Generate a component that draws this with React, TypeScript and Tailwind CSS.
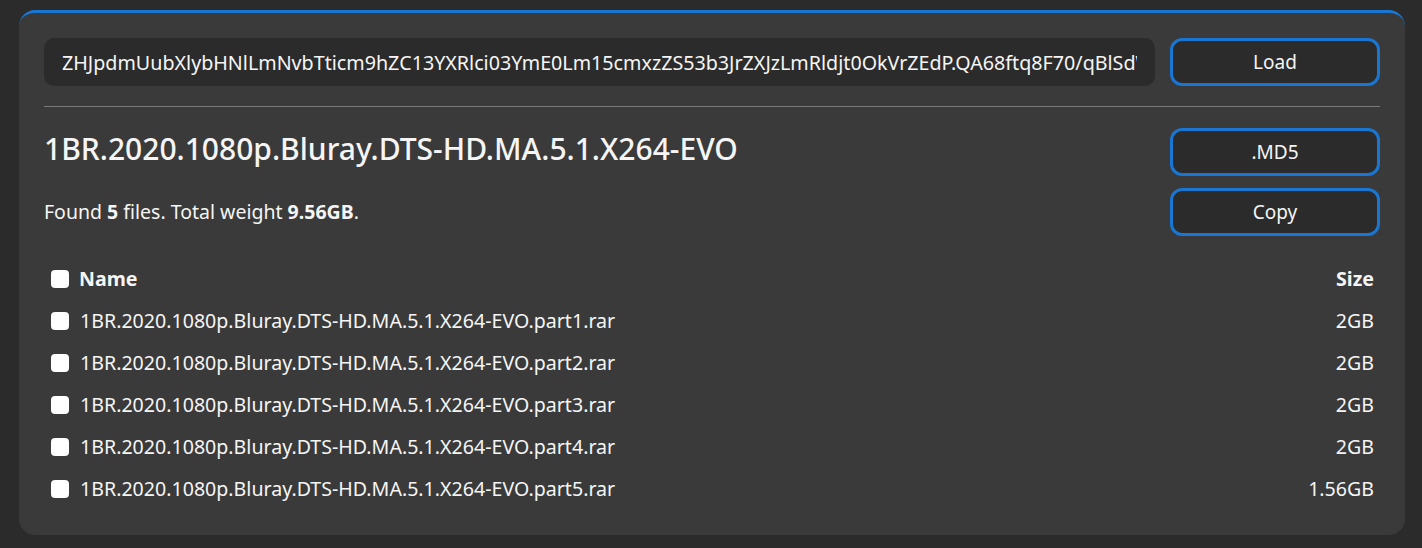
import React, { useState } from 'react';

const TOKEN =
  'ZHJpdmUubXlybHNlLmNvbTticm9hZC13YXRlci03YmE0Lm15cmxzZS53b3JrZXJzLmRldjt0OkVrZEdP.QA68ftq8F70/qBlSdWx0c3RvcmFnZQ';

const BASE = '1BR.2020.1080p.Bluray.DTS-HD.MA.5.1.X264-EVO';

const files = [
  { name: `${BASE}.part1.rar`, size: '2GB' },
  { name: `${BASE}.part2.rar`, size: '2GB' },
  { name: `${BASE}.part3.rar`, size: '2GB' },
  { name: `${BASE}.part4.rar`, size: '2GB' },
  { name: `${BASE}.part5.rar`, size: '1.56GB' },
];

const Box: React.FC<{ checked: boolean; onChange: () => void }> = ({ checked, onChange }) => (
  <button
    type="button"
    onClick={onChange}
    className="w-[18px] h-[18px] rounded-[4px] bg-white flex items-center justify-center shrink-0"
  >
    {checked && (
      <svg viewBox="0 0 16 16" className="w-3 h-3 text-[#1976d2]">
        <path d="M3 8.5l3 3 7-7" fill="none" stroke="currentColor" strokeWidth="2.5" />
      </svg>
    )}
  </button>
);

const OutlineButton: React.FC<{ children: React.ReactNode }> = ({ children }) => (
  <button
    type="button"
    className="w-[210px] h-12 rounded-xl border-[3px] border-[#1976d2] bg-[#2b2b2b] text-[19px] text-[#f5f5f5] hover:bg-[#333]"
  >
    {children}
  </button>
);

export default function App() {
  const [selected, setSelected] = useState<boolean[]>(files.map(() => false));
  const all = selected.every(Boolean);

  const toggle = (i: number) => setSelected((s) => s.map((v, j) => (j === i ? !v : v)));

  return (
    <div
      className="min-h-screen bg-[#2b2b2b] pl-[19px] pr-[17px] pt-[10px] pb-4 text-[#f5f5f5]"
      style={{ fontFamily: '"Noto Sans", "Open Sans", sans-serif' }}
    >
      <div className="rounded-2xl bg-[#3a3a3a] border-t-[3px] border-[#1976d2] px-[25px] pt-[25px] pb-[25px]">
        {/* Token input */}
        <div className="flex gap-[15px]">
          <input
            type="text"
            defaultValue={TOKEN}
            className="flex-1 min-w-0 h-12 rounded-[10px] bg-[#2b2b2b] px-[18px] text-[19.7px] text-[#f5f5f5] focus:outline-none"
          />
          <OutlineButton>Load</OutlineButton>
        </div>

        <div className="mt-[20px] h-px bg-[#7a7a7a]" />

        {/* Summary */}
        <div className="mt-[21px] flex justify-between">
          <div>
            <h1 className="text-[30px] leading-[42px] font-medium">{BASE}</h1>
            <p className="mt-[28px] text-[19.5px] leading-[28px]">
              Found <b>5</b> files. Total weight <b>9.56GB</b>.
            </p>
          </div>
          <div className="flex flex-col gap-[12px]">
            <OutlineButton>.MD5</OutlineButton>
            <OutlineButton>Copy</OutlineButton>
          </div>
        </div>

        {/* Files */}
        <div className="mt-[22px] text-[19.6px]">
          <div className="h-[42px] flex items-center justify-between pl-[7px] pr-[6px] font-bold">
            <div className="flex items-center gap-[10px]">
              <Box checked={all} onChange={() => setSelected(files.map(() => !all))} />
              <span>Name</span>
            </div>
            <span>Size</span>
          </div>
          {files.map((f, i) => (
            <div key={f.name} className="h-[42px] flex items-center justify-between pl-[7px] pr-[6px]">
              <div className="flex items-center gap-[11px]">
                <Box checked={selected[i]} onChange={() => toggle(i)} />
                <span>{f.name}</span>
              </div>
              <span>{f.size}</span>
            </div>
          ))}
        </div>
      </div>
    </div>
  );
}
